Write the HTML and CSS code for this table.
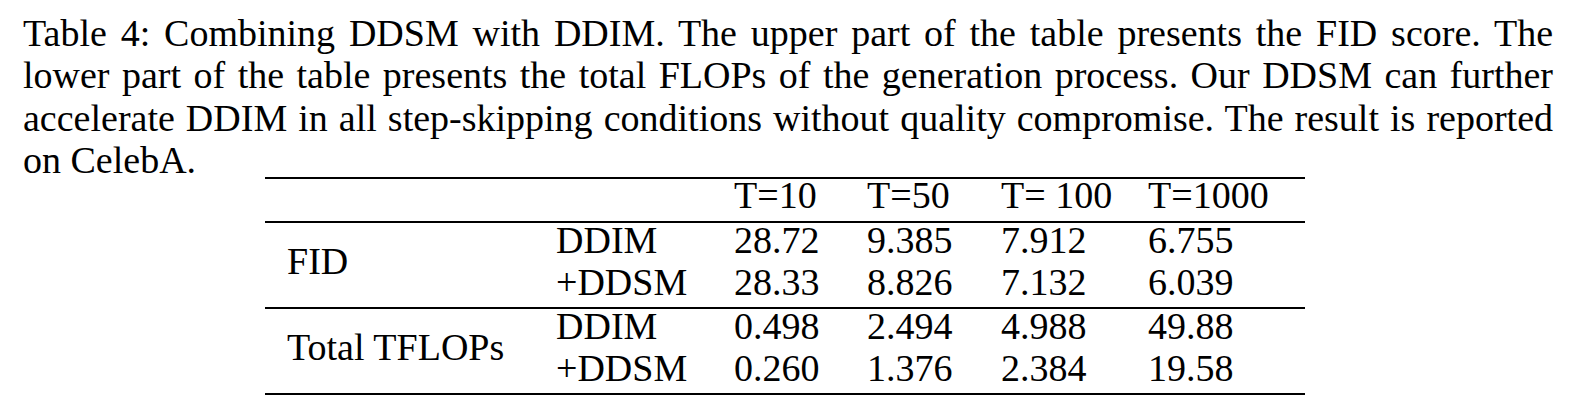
FILE: index.html
```html
<!DOCTYPE html>
<html lang="en">
<head>
    <meta charset="UTF-8">
    <meta name="viewport" content="width=device-width, initial-scale=1.0">
    <title>Table 4</title>
    <link rel="stylesheet" href="styles.css">
</head>
<body>
    <div class="figure">
        <p class="caption">Table 4: Combining DDSM with DDIM. The upper part of the table presents the FID score. The lower part of the table presents the total FLOPs of the generation process. Our DDSM can further accelerate DDIM in all step-skipping conditions without quality compromise. The result is reported <span class="dataset">on CelebA.</span></p>
        <table class="results">
            <colgroup>
                <col class="c-metric">
                <col class="c-method">
                <col class="c-t10">
                <col class="c-t50">
                <col class="c-t100">
                <col class="c-t1000">
            </colgroup>
            <thead>
                <tr>
                    <td></td>
                    <td></td>
                    <td>T=10</td>
                    <td>T=50</td>
                    <td>T= 100</td>
                    <td>T=1000</td>
                </tr>
            </thead>
            <tbody>
                <tr>
                    <td rowspan="2" class="metric">FID</td>
                    <td>DDIM</td>
                    <td>28.72</td>
                    <td>9.385</td>
                    <td>7.912</td>
                    <td>6.755</td>
                </tr>
                <tr class="group-end">
                    <td>+DDSM</td>
                    <td>28.33</td>
                    <td>8.826</td>
                    <td>7.132</td>
                    <td>6.039</td>
                </tr>
                <tr>
                    <td rowspan="2" class="metric">Total TFLOPs</td>
                    <td>DDIM</td>
                    <td>0.498</td>
                    <td>2.494</td>
                    <td>4.988</td>
                    <td>49.88</td>
                </tr>
                <tr class="group-end">
                    <td>+DDSM</td>
                    <td>0.260</td>
                    <td>1.376</td>
                    <td>2.384</td>
                    <td>19.58</td>
                </tr>
            </tbody>
        </table>
    </div>
</body>
</html>
```

FILE: styles.css
```css
* {
    margin: 0;
    padding: 0;
    box-sizing: border-box;
}
body {
    background: #fff;
    color: #000;
    font-family: "Liberation Serif", "Times New Roman", serif;
    font-size: 38px;
    padding: 12px 0 0 23px;
}
.figure {
    width: 1530px;
}
.caption {
    line-height: 42.4px;
    text-align: justify;
}
.results {
    margin: -5px 0 0 242px;
    width: 1040px;
    table-layout: fixed;
    border-collapse: separate;
    border-spacing: 0;
}
.c-metric { width: 269px; }
.c-method { width: 178px; }
.c-t10 { width: 133px; }
.c-t50 { width: 134px; }
.c-t100 { width: 147px; }
.c-t1000 { width: 179px; }
.results td {
    padding: 0 0 7px 22px;
    line-height: 35px;
    text-align: left;
    white-space: nowrap;
    vertical-align: top;
}
.results thead td {
    border-top: 2px solid #000;
    border-bottom: 2px solid #000;
    line-height: 33px;
    padding-bottom: 9px;
}
.results .metric {
    vertical-align: middle;
}
.results .group-end td,
.results td.metric {
    border-bottom: 2px solid #000;
}
```
